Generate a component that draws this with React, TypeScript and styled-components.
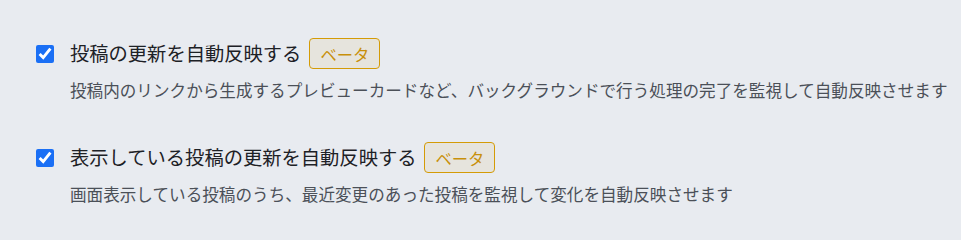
import React from 'react';
import styled, { createGlobalStyle } from 'styled-components';

const GlobalStyle = createGlobalStyle`
    body {
        margin: 0;
        background: #e8ebf0;
        font-family: "Noto Sans CJK JP", "Noto Sans", sans-serif;
    }
`;

type Setting = {
    title: string;
    description: string;
};

const settings: Setting[] = [
    {
        title: '投稿の更新を自動反映する',
        description: '投稿内のリンクから生成するプレビューカードなど、バックグラウンドで行う処理の完了を監視して自動反映させます',
    },
    {
        title: '表示している投稿の更新を自動反映する',
        description: '画面表示している投稿のうち、最近変更のあった投稿を監視して変化を自動反映させます',
    },
];

// Whole settings panel
const Panel = styled.div`
    display: flex;
    flex-direction: column;
    gap: 39px;
    padding: 38px 0 0 36px;
    width: 961px;
    height: 240px;
    box-sizing: border-box;
`;

const Item = styled.div`
    display: flex;
    flex-direction: column;
    gap: 8px;
`;

const TitleRow = styled.label`
    display: flex;
    align-items: center;
    height: 31px;
`;

// Native checkbox tinted to the blue of the reference
const Check = styled.input.attrs({ type: 'checkbox' })`
    width: 18px;
    height: 18px;
    margin: 0 16px 0 0;
    accent-color: #1a6ff5;
`;

const Title = styled.span`
    font-size: 19.3px;
    color: #1d2126;
    line-height: 1;
`;

const Badge = styled.span`
    margin-left: 8px;
    height: 31px;
    box-sizing: border-box;
    padding: 0 10px;
    display: inline-flex;
    align-items: center;
    border: 1.5px solid #d49b06;
    border-radius: 4px;
    background: #e6e4dd;
    color: #c8900a;
    font-size: 16.3px;
`;

const Description = styled.p`
    margin: 0 0 0 34px;
    font-size: 16.6px;
    line-height: 26px;
    color: #4b5058;
    white-space: nowrap;
`;

export default function App() {
    return (
        <>
            <GlobalStyle/>
            <Panel>
                {settings.map((s) => (
                    <Item key={s.title}>
                        <TitleRow>
                            <Check defaultChecked/>
                            <Title>{s.title}</Title>
                            <Badge>ベータ</Badge>
                        </TitleRow>
                        <Description>{s.description}</Description>
                    </Item>
                ))}
            </Panel>
        </>
    );
}
